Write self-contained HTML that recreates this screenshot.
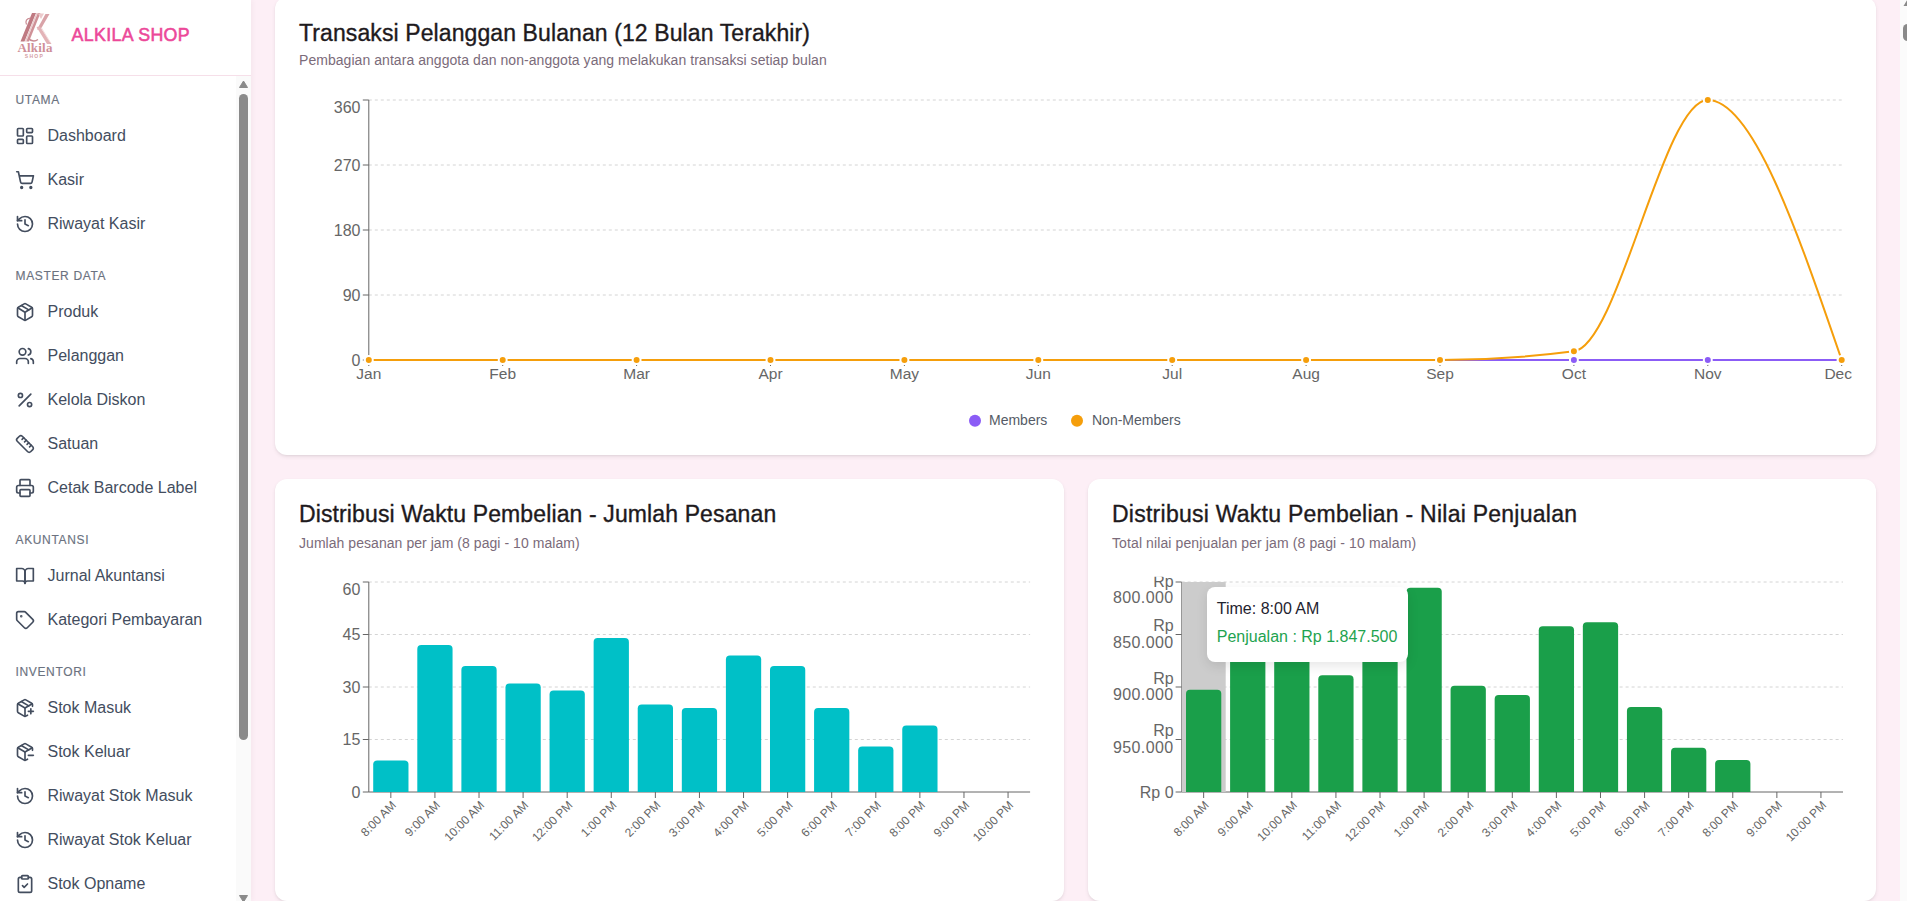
<!DOCTYPE html><html><head><meta charset="utf-8"><style>
html,body{margin:0;padding:0;width:1907px;height:901px;overflow:hidden;background:#fdeff6;font-family:"Liberation Sans",sans-serif}
.t{position:absolute;white-space:pre;line-height:1}
.ic{position:absolute}
#sb{position:absolute;left:0;top:0;width:251px;height:901px;background:#fff;box-shadow:2px 0 5px rgba(60,20,40,0.035)}
.card{position:absolute;background:#fff;border-radius:12px;box-shadow:0 2px 5px -1px rgba(0,0,0,0.11),0 1px 2px rgba(0,0,0,0.04)}
svg.ch{position:absolute;left:0;top:0;overflow:visible}
</style></head><body>
<div id="sb">
<svg style="position:absolute;left:12px;top:8px" width="48" height="54" viewBox="12 8 48 54">
<path d="M32 13 L36 13 L24.5 41.5 L20.5 41.5 Z" fill="#bf7a82"/>
<path d="M36.3 13 L37.6 13 L26.1 41.5 L24.8 41.5 Z" fill="#e9c9cb"/>
<path d="M37.8 13 L40.5 13 L29 41.5 L26.3 41.5 Z" fill="#cf9197"/>
<path d="M45.5 14 L49.5 14 L40.5 29.5 L37 29.5 Z" fill="#d9a3a8"/>
<path d="M36.5 27 L40 26.5 L51.5 44 L47 44 Z" fill="#e3b3b7"/>
<path d="M41 28 L42 28 L50.5 42 L49.5 42 Z" fill="#f1dcdd"/>
<path d="M38 13.5 L44 13.5 L41 19 Z" fill="#ecc9cb"/>
<path d="M30.5 18 C 26.5 18.5, 25 21, 26.5 24.5" stroke="#c98a92" stroke-width="1.2" fill="none"/>
<path d="M28.5 38 C 30.5 41, 34.5 42, 38 39.5" stroke="#c98a92" stroke-width="1.4" fill="none"/>
<text x="35" y="52.3" text-anchor="middle" font-family="Liberation Serif" font-weight="700" font-size="13" fill="#cf8f98" letter-spacing="0.2">Alkila</text>
<text x="34.5" y="58.2" text-anchor="middle" font-family="Liberation Sans" font-weight="700" font-size="5" letter-spacing="1.3" fill="#d49ea5">SHOP</text>
</svg>
<div class="t" style="left:71.50px;top:26.53px;font-size:17.8px;color:#ec4899;font-weight:400;letter-spacing:0.35px;-webkit-text-stroke:0.55px #ec4899;">ALKILA SHOP</div>
<div style="position:absolute;left:0;top:75px;width:251px;height:1px;background:#f6dfe9"></div>
<div class="t" style="left:15.50px;top:94.04px;font-size:12px;color:#6b7280;font-weight:400;letter-spacing:0.65px;-webkit-text-stroke:0.15px #6b7280;">UTAMA</div>
<svg class="ic" style="left:15px;top:126.00px;width:20px;height:20px" viewBox="0 0 24 24" fill="none" stroke="#434d5e" stroke-width="2" stroke-linecap="round" stroke-linejoin="round"><rect width="7" height="9" x="3" y="3" rx="1"/><rect width="7" height="5" x="14" y="3" rx="1"/><rect width="7" height="9" x="14" y="12" rx="1"/><rect width="7" height="5" x="3" y="16" rx="1"/></svg>
<div class="t" style="left:47.50px;top:128.26px;font-size:16px;color:#434d5e;font-weight:400;">Dashboard</div>
<svg class="ic" style="left:15px;top:170.00px;width:20px;height:20px" viewBox="0 0 24 24" fill="none" stroke="#434d5e" stroke-width="2" stroke-linecap="round" stroke-linejoin="round"><circle cx="8" cy="21" r="1"/><circle cx="19" cy="21" r="1"/><path d="M2.05 2.05h2l2.66 12.42a2 2 0 0 0 2 1.58h9.78a2 2 0 0 0 1.95-1.57l1.65-7.43H5.12"/></svg>
<div class="t" style="left:47.50px;top:172.26px;font-size:16px;color:#434d5e;font-weight:400;">Kasir</div>
<svg class="ic" style="left:15px;top:214.00px;width:20px;height:20px" viewBox="0 0 24 24" fill="none" stroke="#434d5e" stroke-width="2" stroke-linecap="round" stroke-linejoin="round"><path d="M3 12a9 9 0 1 0 9-9 9.75 9.75 0 0 0-6.74 2.74L3 8"/><path d="M3 3v5h5"/><path d="M12 7v5l4 2"/></svg>
<div class="t" style="left:47.50px;top:216.26px;font-size:16px;color:#434d5e;font-weight:400;">Riwayat Kasir</div>
<div class="t" style="left:15.50px;top:270.04px;font-size:12px;color:#6b7280;font-weight:400;letter-spacing:0.65px;-webkit-text-stroke:0.15px #6b7280;">MASTER DATA</div>
<svg class="ic" style="left:15px;top:302.00px;width:20px;height:20px" viewBox="0 0 24 24" fill="none" stroke="#434d5e" stroke-width="2" stroke-linecap="round" stroke-linejoin="round"><path d="M11 21.73a2 2 0 0 0 2 0l7-4A2 2 0 0 0 21 16V8a2 2 0 0 0-1-1.73l-7-4a2 2 0 0 0-2 0l-7 4A2 2 0 0 0 3 8v8a2 2 0 0 0 1 1.73z"/><path d="M12 22V12"/><path d="m3.3 7 7.703 4.734a2 2 0 0 0 1.994 0L20.7 7"/><path d="m7.5 4.27 9 5.15"/></svg>
<div class="t" style="left:47.50px;top:304.26px;font-size:16px;color:#434d5e;font-weight:400;">Produk</div>
<svg class="ic" style="left:15px;top:346.00px;width:20px;height:20px" viewBox="0 0 24 24" fill="none" stroke="#434d5e" stroke-width="2" stroke-linecap="round" stroke-linejoin="round"><path d="M16 21v-2a4 4 0 0 0-4-4H6a4 4 0 0 0-4 4v2"/><circle cx="9" cy="7" r="4"/><path d="M22 21v-2a4 4 0 0 0-3-3.87"/><path d="M16 3.13a4 4 0 0 1 0 7.75"/></svg>
<div class="t" style="left:47.50px;top:348.26px;font-size:16px;color:#434d5e;font-weight:400;">Pelanggan</div>
<svg class="ic" style="left:15px;top:390.00px;width:20px;height:20px" viewBox="0 0 24 24" fill="none" stroke="#434d5e" stroke-width="2" stroke-linecap="round" stroke-linejoin="round"><line x1="19" x2="5" y1="5" y2="19"/><circle cx="6.5" cy="6.5" r="2.5"/><circle cx="17.5" cy="17.5" r="2.5"/></svg>
<div class="t" style="left:47.50px;top:392.26px;font-size:16px;color:#434d5e;font-weight:400;">Kelola Diskon</div>
<svg class="ic" style="left:15px;top:434.00px;width:20px;height:20px" viewBox="0 0 24 24" fill="none" stroke="#434d5e" stroke-width="2" stroke-linecap="round" stroke-linejoin="round"><path d="M21.3 15.3a2.4 2.4 0 0 1 0 3.4l-2.6 2.6a2.4 2.4 0 0 1-3.4 0L2.7 8.7a2.41 2.41 0 0 1 0-3.4l2.6-2.6a2.41 2.41 0 0 1 3.4 0Z"/><path d="m14.5 12.5 2-2"/><path d="m11.5 9.5 2-2"/><path d="m8.5 6.5 2-2"/><path d="m17.5 15.5 2-2"/></svg>
<div class="t" style="left:47.50px;top:436.26px;font-size:16px;color:#434d5e;font-weight:400;">Satuan</div>
<svg class="ic" style="left:15px;top:478.00px;width:20px;height:20px" viewBox="0 0 24 24" fill="none" stroke="#434d5e" stroke-width="2" stroke-linecap="round" stroke-linejoin="round"><path d="M6 18H4a2 2 0 0 1-2-2v-5a2 2 0 0 1 2-2h16a2 2 0 0 1 2 2v5a2 2 0 0 1-2 2h-2"/><path d="M6 9V3a1 1 0 0 1 1-1h10a1 1 0 0 1 1 1v6"/><rect x="6" y="14" width="12" height="8" rx="1"/></svg>
<div class="t" style="left:47.50px;top:480.26px;font-size:16px;color:#434d5e;font-weight:400;">Cetak Barcode Label</div>
<div class="t" style="left:15.50px;top:534.04px;font-size:12px;color:#6b7280;font-weight:400;letter-spacing:0.65px;-webkit-text-stroke:0.15px #6b7280;">AKUNTANSI</div>
<svg class="ic" style="left:15px;top:566.00px;width:20px;height:20px" viewBox="0 0 24 24" fill="none" stroke="#434d5e" stroke-width="2" stroke-linecap="round" stroke-linejoin="round"><path d="M2 3h6a4 4 0 0 1 4 4v14a3 3 0 0 0-3-3H2z"/><path d="M22 3h-6a4 4 0 0 0-4 4v14a3 3 0 0 1 3-3h7z"/></svg>
<div class="t" style="left:47.50px;top:568.26px;font-size:16px;color:#434d5e;font-weight:400;">Jurnal Akuntansi</div>
<svg class="ic" style="left:15px;top:610.00px;width:20px;height:20px" viewBox="0 0 24 24" fill="none" stroke="#434d5e" stroke-width="2" stroke-linecap="round" stroke-linejoin="round"><path d="M12.586 2.586A2 2 0 0 0 11.172 2H4a2 2 0 0 0-2 2v7.172a2 2 0 0 0 .586 1.414l8.704 8.704a2.426 2.426 0 0 0 3.42 0l6.58-6.58a2.426 2.426 0 0 0 0-3.42z"/><circle cx="7.5" cy="7.5" r=".5" fill="currentColor"/></svg>
<div class="t" style="left:47.50px;top:612.26px;font-size:16px;color:#434d5e;font-weight:400;">Kategori Pembayaran</div>
<div class="t" style="left:15.50px;top:666.04px;font-size:12px;color:#6b7280;font-weight:400;letter-spacing:0.65px;-webkit-text-stroke:0.15px #6b7280;">INVENTORI</div>
<svg class="ic" style="left:15px;top:698.00px;width:20px;height:20px" viewBox="0 0 24 24" fill="none" stroke="#434d5e" stroke-width="2" stroke-linecap="round" stroke-linejoin="round"><path d="M16 16h6"/><path d="M19 13v6"/><path d="M21 10V8a2 2 0 0 0-1-1.73l-7-4a2 2 0 0 0-2 0l-7 4A2 2 0 0 0 3 8v8a2 2 0 0 0 1 1.73l7 4a2 2 0 0 0 2 0l2-1.14"/><path d="m7.5 4.27 9 5.15"/><polyline points="3.29 7 12 12 20.71 7"/><line x1="12" x2="12" y1="22" y2="12"/></svg>
<div class="t" style="left:47.50px;top:700.26px;font-size:16px;color:#434d5e;font-weight:400;">Stok Masuk</div>
<svg class="ic" style="left:15px;top:742.00px;width:20px;height:20px" viewBox="0 0 24 24" fill="none" stroke="#434d5e" stroke-width="2" stroke-linecap="round" stroke-linejoin="round"><path d="M16 16h6"/><path d="M21 10V8a2 2 0 0 0-1-1.73l-7-4a2 2 0 0 0-2 0l-7 4A2 2 0 0 0 3 8v8a2 2 0 0 0 1 1.73l7 4a2 2 0 0 0 2 0l2-1.14"/><path d="m7.5 4.27 9 5.15"/><polyline points="3.29 7 12 12 20.71 7"/><line x1="12" x2="12" y1="22" y2="12"/></svg>
<div class="t" style="left:47.50px;top:744.26px;font-size:16px;color:#434d5e;font-weight:400;">Stok Keluar</div>
<svg class="ic" style="left:15px;top:786.00px;width:20px;height:20px" viewBox="0 0 24 24" fill="none" stroke="#434d5e" stroke-width="2" stroke-linecap="round" stroke-linejoin="round"><path d="M3 12a9 9 0 1 0 9-9 9.75 9.75 0 0 0-6.74 2.74L3 8"/><path d="M3 3v5h5"/><path d="M12 7v5l4 2"/></svg>
<div class="t" style="left:47.50px;top:788.26px;font-size:16px;color:#434d5e;font-weight:400;">Riwayat Stok Masuk</div>
<svg class="ic" style="left:15px;top:830.00px;width:20px;height:20px" viewBox="0 0 24 24" fill="none" stroke="#434d5e" stroke-width="2" stroke-linecap="round" stroke-linejoin="round"><path d="M3 12a9 9 0 1 0 9-9 9.75 9.75 0 0 0-6.74 2.74L3 8"/><path d="M3 3v5h5"/><path d="M12 7v5l4 2"/></svg>
<div class="t" style="left:47.50px;top:832.26px;font-size:16px;color:#434d5e;font-weight:400;">Riwayat Stok Keluar</div>
<svg class="ic" style="left:15px;top:874.00px;width:20px;height:20px" viewBox="0 0 24 24" fill="none" stroke="#434d5e" stroke-width="2" stroke-linecap="round" stroke-linejoin="round"><rect width="8" height="4" x="8" y="2" rx="1" ry="1"/><path d="M16 4h2a2 2 0 0 1 2 2v14a2 2 0 0 1-2 2H6a2 2 0 0 1-2-2V6a2 2 0 0 1 2-2h2"/><path d="m9 14 2 2 4-4"/></svg>
<div class="t" style="left:47.50px;top:876.26px;font-size:16px;color:#434d5e;font-weight:400;">Stok Opname</div>
<div style="position:absolute;left:236px;top:76px;width:15px;height:830px;background:#fafafa"></div>
<svg style="position:absolute;left:236px;top:76px" width="15" height="15"><path d="M3.5 11.5 L7.5 5 L11.5 11.5 Z" fill="#8a8a8a" stroke="#8a8a8a" stroke-width="1" stroke-linejoin="round"/></svg>
<div style="position:absolute;left:239px;top:94px;width:9px;height:646px;background:#8a8a8a;border-radius:5px"></div>
<svg style="position:absolute;left:236px;top:888px" width="15" height="15"><path d="M3.5 7.5 L7.5 14 L11.5 7.5 Z" fill="#8a8a8a" stroke="#8a8a8a" stroke-width="1" stroke-linejoin="round"/></svg>
</div>
<div class="card" style="left:275px;top:-3px;width:1601px;height:458px"></div>
<div class="t" style="left:299.00px;top:21.53px;font-size:23px;color:#1e1a1d;font-weight:400;letter-spacing:0.1px;-webkit-text-stroke:0.35px #1e1a1d;">Transaksi Pelanggan Bulanan (12 Bulan Terakhir)</div>
<div class="t" style="left:299.00px;top:53.35px;font-size:14px;color:#7b6b7a;font-weight:400;letter-spacing:0.05px;">Pembagian antara anggota dan non-anggota yang melakukan transaksi setiap bulan</div>
<svg class="ch" width="1907" height="901">
<line x1="368.8" x2="1841.70" y1="100" y2="100" stroke="#d4d4d4" stroke-dasharray="3 3"/>
<line x1="368.8" x2="1841.70" y1="165" y2="165" stroke="#d4d4d4" stroke-dasharray="3 3"/>
<line x1="368.8" x2="1841.70" y1="230" y2="230" stroke="#d4d4d4" stroke-dasharray="3 3"/>
<line x1="368.8" x2="1841.70" y1="295" y2="295" stroke="#d4d4d4" stroke-dasharray="3 3"/>
<line x1="368.8" x2="368.8" y1="100" y2="360" stroke="#666"/>
<line x1="362.8" x2="368.8" y1="100" y2="100" stroke="#666"/>
<text x="360.5" y="113" text-anchor="end" font-size="16" fill="#666">360</text>
<line x1="362.8" x2="368.8" y1="165" y2="165" stroke="#666"/>
<text x="360.5" y="171" text-anchor="end" font-size="16" fill="#666">270</text>
<line x1="362.8" x2="368.8" y1="230" y2="230" stroke="#666"/>
<text x="360.5" y="236" text-anchor="end" font-size="16" fill="#666">180</text>
<line x1="362.8" x2="368.8" y1="295" y2="295" stroke="#666"/>
<text x="360.5" y="301" text-anchor="end" font-size="16" fill="#666">90</text>
<line x1="362.8" x2="368.8" y1="360" y2="360" stroke="#666"/>
<text x="360.5" y="366" text-anchor="end" font-size="16" fill="#666">0</text>
<line x1="368.8" x2="1841.70" y1="360" y2="360" stroke="#666"/>
<line x1="368.80" x2="368.80" y1="360" y2="366" stroke="#666"/>
<text x="368.80" y="379" text-anchor="middle" font-size="15.5" fill="#666">Jan</text>
<line x1="502.70" x2="502.70" y1="360" y2="366" stroke="#666"/>
<text x="502.70" y="379" text-anchor="middle" font-size="15.5" fill="#666">Feb</text>
<line x1="636.60" x2="636.60" y1="360" y2="366" stroke="#666"/>
<text x="636.60" y="379" text-anchor="middle" font-size="15.5" fill="#666">Mar</text>
<line x1="770.50" x2="770.50" y1="360" y2="366" stroke="#666"/>
<text x="770.50" y="379" text-anchor="middle" font-size="15.5" fill="#666">Apr</text>
<line x1="904.40" x2="904.40" y1="360" y2="366" stroke="#666"/>
<text x="904.40" y="379" text-anchor="middle" font-size="15.5" fill="#666">May</text>
<line x1="1038.30" x2="1038.30" y1="360" y2="366" stroke="#666"/>
<text x="1038.30" y="379" text-anchor="middle" font-size="15.5" fill="#666">Jun</text>
<line x1="1172.20" x2="1172.20" y1="360" y2="366" stroke="#666"/>
<text x="1172.20" y="379" text-anchor="middle" font-size="15.5" fill="#666">Jul</text>
<line x1="1306.10" x2="1306.10" y1="360" y2="366" stroke="#666"/>
<text x="1306.10" y="379" text-anchor="middle" font-size="15.5" fill="#666">Aug</text>
<line x1="1440.00" x2="1440.00" y1="360" y2="366" stroke="#666"/>
<text x="1440.00" y="379" text-anchor="middle" font-size="15.5" fill="#666">Sep</text>
<line x1="1573.90" x2="1573.90" y1="360" y2="366" stroke="#666"/>
<text x="1573.90" y="379" text-anchor="middle" font-size="15.5" fill="#666">Oct</text>
<line x1="1707.80" x2="1707.80" y1="360" y2="366" stroke="#666"/>
<text x="1707.80" y="379" text-anchor="middle" font-size="15.5" fill="#666">Nov</text>
<line x1="1841.70" x2="1841.70" y1="360" y2="366" stroke="#666"/>
<text x="1838.20" y="379" text-anchor="middle" font-size="15.5" fill="#666">Dec</text>
<path d="M368.80,360.00C413.43,360.00,458.07,360.00,502.70,360.00C547.33,360.00,591.97,360.00,636.60,360.00C681.23,360.00,725.87,360.00,770.50,360.00C815.13,360.00,859.77,360.00,904.40,360.00C949.03,360.00,993.67,360.00,1038.30,360.00C1082.93,360.00,1127.57,360.00,1172.20,360.00C1216.83,360.00,1261.47,360.00,1306.10,360.00C1350.73,360.00,1395.37,360.00,1440.00,360.00C1484.63,360.00,1529.27,360.00,1573.90,360.00C1618.53,360.00,1663.17,360.00,1707.80,360.00C1752.43,360.00,1797.07,360.00,1841.70,360.00" fill="none" stroke="#8b5cf6" stroke-width="2"/>
<circle cx="368.80" cy="360.00" r="4" fill="#8b5cf6" stroke="#fff" stroke-width="2"/>
<circle cx="502.70" cy="360.00" r="4" fill="#8b5cf6" stroke="#fff" stroke-width="2"/>
<circle cx="636.60" cy="360.00" r="4" fill="#8b5cf6" stroke="#fff" stroke-width="2"/>
<circle cx="770.50" cy="360.00" r="4" fill="#8b5cf6" stroke="#fff" stroke-width="2"/>
<circle cx="904.40" cy="360.00" r="4" fill="#8b5cf6" stroke="#fff" stroke-width="2"/>
<circle cx="1038.30" cy="360.00" r="4" fill="#8b5cf6" stroke="#fff" stroke-width="2"/>
<circle cx="1172.20" cy="360.00" r="4" fill="#8b5cf6" stroke="#fff" stroke-width="2"/>
<circle cx="1306.10" cy="360.00" r="4" fill="#8b5cf6" stroke="#fff" stroke-width="2"/>
<circle cx="1440.00" cy="360.00" r="4" fill="#8b5cf6" stroke="#fff" stroke-width="2"/>
<circle cx="1573.90" cy="360.00" r="4" fill="#8b5cf6" stroke="#fff" stroke-width="2"/>
<circle cx="1707.80" cy="360.00" r="4" fill="#8b5cf6" stroke="#fff" stroke-width="2"/>
<circle cx="1841.70" cy="360.00" r="4" fill="#8b5cf6" stroke="#fff" stroke-width="2"/>
<path d="M368.80,360.00C413.43,360.00,458.07,360.00,502.70,360.00C547.33,360.00,591.97,360.00,636.60,360.00C681.23,360.00,725.87,360.00,770.50,360.00C815.13,360.00,859.77,360.00,904.40,360.00C949.03,360.00,993.67,360.00,1038.30,360.00C1082.93,360.00,1127.57,360.00,1172.20,360.00C1216.83,360.00,1261.47,360.00,1306.10,360.00C1350.73,360.00,1395.37,360.00,1440.00,360.00C1484.63,360.00,1529.27,357.11,1573.90,351.33C1618.53,345.56,1663.17,100.00,1707.80,100.00C1752.43,100.00,1797.07,230.00,1841.70,360.00" fill="none" stroke="#f59e0b" stroke-width="2"/>
<circle cx="368.80" cy="360.00" r="4" fill="#f59e0b" stroke="#fff" stroke-width="2"/>
<circle cx="502.70" cy="360.00" r="4" fill="#f59e0b" stroke="#fff" stroke-width="2"/>
<circle cx="636.60" cy="360.00" r="4" fill="#f59e0b" stroke="#fff" stroke-width="2"/>
<circle cx="770.50" cy="360.00" r="4" fill="#f59e0b" stroke="#fff" stroke-width="2"/>
<circle cx="904.40" cy="360.00" r="4" fill="#f59e0b" stroke="#fff" stroke-width="2"/>
<circle cx="1038.30" cy="360.00" r="4" fill="#f59e0b" stroke="#fff" stroke-width="2"/>
<circle cx="1172.20" cy="360.00" r="4" fill="#f59e0b" stroke="#fff" stroke-width="2"/>
<circle cx="1306.10" cy="360.00" r="4" fill="#f59e0b" stroke="#fff" stroke-width="2"/>
<circle cx="1440.00" cy="360.00" r="4" fill="#f59e0b" stroke="#fff" stroke-width="2"/>
<circle cx="1573.90" cy="351.33" r="4" fill="#f59e0b" stroke="#fff" stroke-width="2"/>
<circle cx="1707.80" cy="100.00" r="4" fill="#f59e0b" stroke="#fff" stroke-width="2"/>
<circle cx="1841.70" cy="360.00" r="4" fill="#f59e0b" stroke="#fff" stroke-width="2"/>
</svg>
<svg class="ch" width="1907" height="901"><circle cx="975" cy="420.8" r="6" fill="#8b5cf6"/><circle cx="1077" cy="420.8" r="6" fill="#f59e0b"/><text x="989" y="425.2" font-size="14" fill="#555b66">Members</text><text x="1092" y="425.2" font-size="14" fill="#555b66">Non-Members</text></svg>
<div class="card" style="left:275px;top:479px;width:789px;height:422.4px"></div>
<div class="t" style="left:299.00px;top:503.33px;font-size:23px;color:#1e1a1d;font-weight:400;letter-spacing:0.12px;-webkit-text-stroke:0.35px #1e1a1d;">Distribusi Waktu Pembelian - Jumlah Pesanan</div>
<div class="t" style="left:299.00px;top:535.65px;font-size:14px;color:#7b6b7a;font-weight:400;letter-spacing:0.05px;">Jumlah pesanan per jam (8 pagi - 10 malam)</div>
<svg class="ch" width="1907" height="901">
<line x1="368.8" x2="1030.10" y1="582.0" y2="582.0" stroke="#d4d4d4" stroke-dasharray="3 3"/>
<line x1="368.8" x2="1030.10" y1="634.5" y2="634.5" stroke="#d4d4d4" stroke-dasharray="3 3"/>
<line x1="368.8" x2="1030.10" y1="687.0" y2="687.0" stroke="#d4d4d4" stroke-dasharray="3 3"/>
<line x1="368.8" x2="1030.10" y1="739.5" y2="739.5" stroke="#d4d4d4" stroke-dasharray="3 3"/>
<line x1="368.8" x2="368.8" y1="582" y2="792" stroke="#666"/>
<line x1="368.8" x2="1030.10" y1="792" y2="792" stroke="#666"/>
<path d="M373.21,792L373.21,764.50A4,4,0,0,1,377.21,760.50L404.48,760.50A4,4,0,0,1,408.48,764.50L408.48,792Z" fill="#00c0c7"/>
<path d="M417.30,792L417.30,649.00A4,4,0,0,1,421.30,645.00L448.56,645.00A4,4,0,0,1,452.56,649.00L452.56,792Z" fill="#00c0c7"/>
<path d="M461.38,792L461.38,670.00A4,4,0,0,1,465.38,666.00L492.65,666.00A4,4,0,0,1,496.65,670.00L496.65,792Z" fill="#00c0c7"/>
<path d="M505.47,792L505.47,687.50A4,4,0,0,1,509.47,683.50L536.74,683.50A4,4,0,0,1,540.74,687.50L540.74,792Z" fill="#00c0c7"/>
<path d="M549.56,792L549.56,694.50A4,4,0,0,1,553.56,690.50L580.82,690.50A4,4,0,0,1,584.82,694.50L584.82,792Z" fill="#00c0c7"/>
<path d="M593.64,792L593.64,642.00A4,4,0,0,1,597.64,638.00L624.91,638.00A4,4,0,0,1,628.91,642.00L628.91,792Z" fill="#00c0c7"/>
<path d="M637.73,792L637.73,708.50A4,4,0,0,1,641.73,704.50L669.00,704.50A4,4,0,0,1,673.00,708.50L673.00,792Z" fill="#00c0c7"/>
<path d="M681.82,792L681.82,712.00A4,4,0,0,1,685.82,708.00L713.08,708.00A4,4,0,0,1,717.08,712.00L717.08,792Z" fill="#00c0c7"/>
<path d="M725.90,792L725.90,659.50A4,4,0,0,1,729.90,655.50L757.17,655.50A4,4,0,0,1,761.17,659.50L761.17,792Z" fill="#00c0c7"/>
<path d="M769.99,792L769.99,670.00A4,4,0,0,1,773.99,666.00L801.26,666.00A4,4,0,0,1,805.26,670.00L805.26,792Z" fill="#00c0c7"/>
<path d="M814.08,792L814.08,712.00A4,4,0,0,1,818.08,708.00L845.34,708.00A4,4,0,0,1,849.34,712.00L849.34,792Z" fill="#00c0c7"/>
<path d="M858.16,792L858.16,750.50A4,4,0,0,1,862.16,746.50L889.43,746.50A4,4,0,0,1,893.43,750.50L893.43,792Z" fill="#00c0c7"/>
<path d="M902.25,792L902.25,729.50A4,4,0,0,1,906.25,725.50L933.52,725.50A4,4,0,0,1,937.52,729.50L937.52,792Z" fill="#00c0c7"/>
<line x1="362.8" x2="368.8" y1="582.0" y2="582.0" stroke="#666"/>
<line x1="362.8" x2="368.8" y1="634.5" y2="634.5" stroke="#666"/>
<line x1="362.8" x2="368.8" y1="687.0" y2="687.0" stroke="#666"/>
<line x1="362.8" x2="368.8" y1="739.5" y2="739.5" stroke="#666"/>
<line x1="362.8" x2="368.8" y1="792.0" y2="792.0" stroke="#666"/>
<text x="360.3" y="595.0" text-anchor="end" font-size="16" fill="#666">60</text>
<text x="360.3" y="640.1" text-anchor="end" font-size="16" fill="#666">45</text>
<text x="360.3" y="692.6" text-anchor="end" font-size="16" fill="#666">30</text>
<text x="360.3" y="745.1" text-anchor="end" font-size="16" fill="#666">15</text>
<text x="360.3" y="797.6" text-anchor="end" font-size="16" fill="#666">0</text>
<line x1="390.84" x2="390.84" y1="792" y2="798" stroke="#666"/>
<text transform="rotate(-45 390.84 800)" x="390.84" y="800" text-anchor="end" font-size="12" fill="#666"><tspan dy="0.71em">8:00 AM</tspan></text>
<line x1="434.93" x2="434.93" y1="792" y2="798" stroke="#666"/>
<text transform="rotate(-45 434.93 800)" x="434.93" y="800" text-anchor="end" font-size="12" fill="#666"><tspan dy="0.71em">9:00 AM</tspan></text>
<line x1="479.02" x2="479.02" y1="792" y2="798" stroke="#666"/>
<text transform="rotate(-45 479.02 800)" x="479.02" y="800" text-anchor="end" font-size="12" fill="#666"><tspan dy="0.71em">10:00 AM</tspan></text>
<line x1="523.10" x2="523.10" y1="792" y2="798" stroke="#666"/>
<text transform="rotate(-45 523.10 800)" x="523.10" y="800" text-anchor="end" font-size="12" fill="#666"><tspan dy="0.71em">11:00 AM</tspan></text>
<line x1="567.19" x2="567.19" y1="792" y2="798" stroke="#666"/>
<text transform="rotate(-45 567.19 800)" x="567.19" y="800" text-anchor="end" font-size="12" fill="#666"><tspan dy="0.71em">12:00 PM</tspan></text>
<line x1="611.28" x2="611.28" y1="792" y2="798" stroke="#666"/>
<text transform="rotate(-45 611.28 800)" x="611.28" y="800" text-anchor="end" font-size="12" fill="#666"><tspan dy="0.71em">1:00 PM</tspan></text>
<line x1="655.36" x2="655.36" y1="792" y2="798" stroke="#666"/>
<text transform="rotate(-45 655.36 800)" x="655.36" y="800" text-anchor="end" font-size="12" fill="#666"><tspan dy="0.71em">2:00 PM</tspan></text>
<line x1="699.45" x2="699.45" y1="792" y2="798" stroke="#666"/>
<text transform="rotate(-45 699.45 800)" x="699.45" y="800" text-anchor="end" font-size="12" fill="#666"><tspan dy="0.71em">3:00 PM</tspan></text>
<line x1="743.54" x2="743.54" y1="792" y2="798" stroke="#666"/>
<text transform="rotate(-45 743.54 800)" x="743.54" y="800" text-anchor="end" font-size="12" fill="#666"><tspan dy="0.71em">4:00 PM</tspan></text>
<line x1="787.62" x2="787.62" y1="792" y2="798" stroke="#666"/>
<text transform="rotate(-45 787.62 800)" x="787.62" y="800" text-anchor="end" font-size="12" fill="#666"><tspan dy="0.71em">5:00 PM</tspan></text>
<line x1="831.71" x2="831.71" y1="792" y2="798" stroke="#666"/>
<text transform="rotate(-45 831.71 800)" x="831.71" y="800" text-anchor="end" font-size="12" fill="#666"><tspan dy="0.71em">6:00 PM</tspan></text>
<line x1="875.80" x2="875.80" y1="792" y2="798" stroke="#666"/>
<text transform="rotate(-45 875.80 800)" x="875.80" y="800" text-anchor="end" font-size="12" fill="#666"><tspan dy="0.71em">7:00 PM</tspan></text>
<line x1="919.88" x2="919.88" y1="792" y2="798" stroke="#666"/>
<text transform="rotate(-45 919.88 800)" x="919.88" y="800" text-anchor="end" font-size="12" fill="#666"><tspan dy="0.71em">8:00 PM</tspan></text>
<line x1="963.97" x2="963.97" y1="792" y2="798" stroke="#666"/>
<text transform="rotate(-45 963.97 800)" x="963.97" y="800" text-anchor="end" font-size="12" fill="#666"><tspan dy="0.71em">9:00 PM</tspan></text>
<line x1="1008.06" x2="1008.06" y1="792" y2="798" stroke="#666"/>
<text transform="rotate(-45 1008.06 800)" x="1008.06" y="800" text-anchor="end" font-size="12" fill="#666"><tspan dy="0.71em">10:00 PM</tspan></text>
</svg>
<div class="card" style="left:1088px;top:479px;width:788px;height:422.4px"></div>
<div class="t" style="left:1112.00px;top:503.33px;font-size:23px;color:#1e1a1d;font-weight:400;letter-spacing:0.25px;-webkit-text-stroke:0.35px #1e1a1d;">Distribusi Waktu Pembelian - Nilai Penjualan</div>
<div class="t" style="left:1112.00px;top:535.65px;font-size:14px;color:#7b6b7a;font-weight:400;letter-spacing:0.11px;">Total nilai penjualan per jam (8 pagi - 10 malam)</div>
<svg class="ch" width="1907" height="901">
<line x1="1181.6" x2="1843.00" y1="582.0" y2="582.0" stroke="#d4d4d4" stroke-dasharray="3 3"/>
<line x1="1181.6" x2="1843.00" y1="634.5" y2="634.5" stroke="#d4d4d4" stroke-dasharray="3 3"/>
<line x1="1181.6" x2="1843.00" y1="687.0" y2="687.0" stroke="#d4d4d4" stroke-dasharray="3 3"/>
<line x1="1181.6" x2="1843.00" y1="739.5" y2="739.5" stroke="#d4d4d4" stroke-dasharray="3 3"/>
<line x1="1181.6" x2="1181.6" y1="582" y2="792" stroke="#666"/>
<line x1="1181.6" x2="1843.00" y1="792" y2="792" stroke="#666"/>
<rect x="1181.60" y="582" width="44.09" height="210" fill="#cccccc"/>
<path d="M1186.01,792L1186.01,693.70A4,4,0,0,1,1190.01,689.70L1217.28,689.70A4,4,0,0,1,1221.28,693.70L1221.28,792Z" fill="#1a9f4a"/>
<path d="M1230.10,792L1230.10,644.00A4,4,0,0,1,1234.10,640.00L1261.38,640.00A4,4,0,0,1,1265.38,644.00L1265.38,792Z" fill="#1a9f4a"/>
<path d="M1274.20,792L1274.20,654.00A4,4,0,0,1,1278.20,650.00L1305.47,650.00A4,4,0,0,1,1309.47,654.00L1309.47,792Z" fill="#1a9f4a"/>
<path d="M1318.29,792L1318.29,679.20A4,4,0,0,1,1322.29,675.20L1349.56,675.20A4,4,0,0,1,1353.56,679.20L1353.56,792Z" fill="#1a9f4a"/>
<path d="M1362.38,792L1362.38,636.00A4,4,0,0,1,1366.38,632.00L1393.66,632.00A4,4,0,0,1,1397.66,636.00L1397.66,792Z" fill="#1a9f4a"/>
<path d="M1406.48,792L1406.48,591.70A4,4,0,0,1,1410.48,587.70L1437.75,587.70A4,4,0,0,1,1441.75,591.70L1441.75,792Z" fill="#1a9f4a"/>
<path d="M1450.57,792L1450.57,689.80A4,4,0,0,1,1454.57,685.80L1481.84,685.80A4,4,0,0,1,1485.84,689.80L1485.84,792Z" fill="#1a9f4a"/>
<path d="M1494.66,792L1494.66,698.90A4,4,0,0,1,1498.66,694.90L1525.94,694.90A4,4,0,0,1,1529.94,698.90L1529.94,792Z" fill="#1a9f4a"/>
<path d="M1538.76,792L1538.76,630.20A4,4,0,0,1,1542.76,626.20L1570.03,626.20A4,4,0,0,1,1574.03,630.20L1574.03,792Z" fill="#1a9f4a"/>
<path d="M1582.85,792L1582.85,626.20A4,4,0,0,1,1586.85,622.20L1614.12,622.20A4,4,0,0,1,1618.12,626.20L1618.12,792Z" fill="#1a9f4a"/>
<path d="M1626.94,792L1626.94,711.00A4,4,0,0,1,1630.94,707.00L1658.22,707.00A4,4,0,0,1,1662.22,711.00L1662.22,792Z" fill="#1a9f4a"/>
<path d="M1671.04,792L1671.04,751.80A4,4,0,0,1,1675.04,747.80L1702.31,747.80A4,4,0,0,1,1706.31,751.80L1706.31,792Z" fill="#1a9f4a"/>
<path d="M1715.13,792L1715.13,763.90A4,4,0,0,1,1719.13,759.90L1746.40,759.90A4,4,0,0,1,1750.40,763.90L1750.40,792Z" fill="#1a9f4a"/>
<line x1="1175.6" x2="1181.6" y1="582.0" y2="582.0" stroke="#666"/>
<line x1="1175.6" x2="1181.6" y1="634.5" y2="634.5" stroke="#666"/>
<line x1="1175.6" x2="1181.6" y1="687.0" y2="687.0" stroke="#666"/>
<line x1="1175.6" x2="1181.6" y1="739.5" y2="739.5" stroke="#666"/>
<line x1="1175.6" x2="1181.6" y1="792.0" y2="792.0" stroke="#666"/>
<defs><clipPath id="cliptop"><rect x="1080" y="576.8" width="200" height="60"/></clipPath></defs><text x="1173.6" y="586.5" text-anchor="end" font-size="16" fill="#666" clip-path="url(#cliptop)">Rp</text>
<text x="1173.6" y="603.0" text-anchor="end" font-size="16" fill="#666" letter-spacing="0.4">800.000</text>
<text x="1173.6" y="631.0" text-anchor="end" font-size="16" fill="#666">Rp</text>
<text x="1173.6" y="647.5" text-anchor="end" font-size="16" fill="#666" letter-spacing="0.4">850.000</text>
<text x="1173.6" y="683.5" text-anchor="end" font-size="16" fill="#666">Rp</text>
<text x="1173.6" y="700.0" text-anchor="end" font-size="16" fill="#666" letter-spacing="0.4">900.000</text>
<text x="1173.6" y="736.0" text-anchor="end" font-size="16" fill="#666">Rp</text>
<text x="1173.6" y="752.5" text-anchor="end" font-size="16" fill="#666" letter-spacing="0.4">950.000</text>
<text x="1173.6" y="797.6" text-anchor="end" font-size="16" fill="#666">Rp 0</text>
<line x1="1203.65" x2="1203.65" y1="792" y2="798" stroke="#666"/>
<text transform="rotate(-45 1203.65 800)" x="1203.65" y="800" text-anchor="end" font-size="12" fill="#666"><tspan dy="0.71em">8:00 AM</tspan></text>
<line x1="1247.74" x2="1247.74" y1="792" y2="798" stroke="#666"/>
<text transform="rotate(-45 1247.74 800)" x="1247.74" y="800" text-anchor="end" font-size="12" fill="#666"><tspan dy="0.71em">9:00 AM</tspan></text>
<line x1="1291.83" x2="1291.83" y1="792" y2="798" stroke="#666"/>
<text transform="rotate(-45 1291.83 800)" x="1291.83" y="800" text-anchor="end" font-size="12" fill="#666"><tspan dy="0.71em">10:00 AM</tspan></text>
<line x1="1335.93" x2="1335.93" y1="792" y2="798" stroke="#666"/>
<text transform="rotate(-45 1335.93 800)" x="1335.93" y="800" text-anchor="end" font-size="12" fill="#666"><tspan dy="0.71em">11:00 AM</tspan></text>
<line x1="1380.02" x2="1380.02" y1="792" y2="798" stroke="#666"/>
<text transform="rotate(-45 1380.02 800)" x="1380.02" y="800" text-anchor="end" font-size="12" fill="#666"><tspan dy="0.71em">12:00 PM</tspan></text>
<line x1="1424.11" x2="1424.11" y1="792" y2="798" stroke="#666"/>
<text transform="rotate(-45 1424.11 800)" x="1424.11" y="800" text-anchor="end" font-size="12" fill="#666"><tspan dy="0.71em">1:00 PM</tspan></text>
<line x1="1468.21" x2="1468.21" y1="792" y2="798" stroke="#666"/>
<text transform="rotate(-45 1468.21 800)" x="1468.21" y="800" text-anchor="end" font-size="12" fill="#666"><tspan dy="0.71em">2:00 PM</tspan></text>
<line x1="1512.30" x2="1512.30" y1="792" y2="798" stroke="#666"/>
<text transform="rotate(-45 1512.30 800)" x="1512.30" y="800" text-anchor="end" font-size="12" fill="#666"><tspan dy="0.71em">3:00 PM</tspan></text>
<line x1="1556.39" x2="1556.39" y1="792" y2="798" stroke="#666"/>
<text transform="rotate(-45 1556.39 800)" x="1556.39" y="800" text-anchor="end" font-size="12" fill="#666"><tspan dy="0.71em">4:00 PM</tspan></text>
<line x1="1600.49" x2="1600.49" y1="792" y2="798" stroke="#666"/>
<text transform="rotate(-45 1600.49 800)" x="1600.49" y="800" text-anchor="end" font-size="12" fill="#666"><tspan dy="0.71em">5:00 PM</tspan></text>
<line x1="1644.58" x2="1644.58" y1="792" y2="798" stroke="#666"/>
<text transform="rotate(-45 1644.58 800)" x="1644.58" y="800" text-anchor="end" font-size="12" fill="#666"><tspan dy="0.71em">6:00 PM</tspan></text>
<line x1="1688.67" x2="1688.67" y1="792" y2="798" stroke="#666"/>
<text transform="rotate(-45 1688.67 800)" x="1688.67" y="800" text-anchor="end" font-size="12" fill="#666"><tspan dy="0.71em">7:00 PM</tspan></text>
<line x1="1732.77" x2="1732.77" y1="792" y2="798" stroke="#666"/>
<text transform="rotate(-45 1732.77 800)" x="1732.77" y="800" text-anchor="end" font-size="12" fill="#666"><tspan dy="0.71em">8:00 PM</tspan></text>
<line x1="1776.86" x2="1776.86" y1="792" y2="798" stroke="#666"/>
<text transform="rotate(-45 1776.86 800)" x="1776.86" y="800" text-anchor="end" font-size="12" fill="#666"><tspan dy="0.71em">9:00 PM</tspan></text>
<line x1="1820.95" x2="1820.95" y1="792" y2="798" stroke="#666"/>
<text transform="rotate(-45 1820.95 800)" x="1820.95" y="800" text-anchor="end" font-size="12" fill="#666"><tspan dy="0.71em">10:00 PM</tspan></text>
</svg>
<div style="position:absolute;left:1207px;top:587px;width:201px;height:75px;background:#fff;border-radius:8px;box-shadow:0 4px 12px rgba(0,0,0,0.10)"></div>
<div class="t" style="left:1216.80px;top:601.36px;font-size:16px;color:#1f2430;font-weight:400;">Time: 8:00 AM</div>
<div class="t" style="left:1216.80px;top:629.26px;font-size:16px;color:#1ea34f;font-weight:400;">Penjualan : Rp 1.847.500</div>
<div style="position:absolute;left:1900px;top:0;width:15px;height:901px;background:#fbfbfb"></div>
<svg style="position:absolute;left:1900px;top:0" width="15" height="15"><path d="M3.5 6 L7.5 -0.5 L11.5 6 Z" fill="#8a8a8a"/></svg>
<div style="position:absolute;left:1903px;top:24px;width:9px;height:17px;background:#8a8a8a;border-radius:5px"></div>
</body></html>
